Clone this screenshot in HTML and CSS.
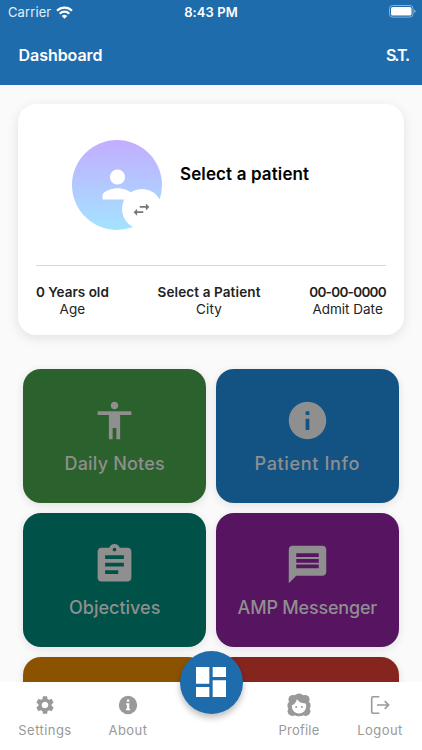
FILE: index.html
```html
<!DOCTYPE html>
<html lang="en">
<head>
<meta charset="utf-8">
<title>Dashboard</title>
<link rel="stylesheet" href="styles.css">
</head>
<body>
<div class="app">
  <header class="header">
    <div class="status">
      <div class="carrier"><span>Carrier</span>
        <svg class="wifi" viewBox="0 0 17 13"><g fill="none" stroke="currentColor" stroke-width="2.2"><path d="M1 4.8a10.6 10.6 0 0 1 15 0"/><path d="M3.7 7.7a6.8 6.8 0 0 1 9.6 0"/></g><path fill="currentColor" d="M5.7 10a4 4 0 0 1 5.6 0L8.5 12.8z"/></svg>
      </div>
      <span class="time">8:43 PM</span>
      <svg class="battery" viewBox="0 0 27 13"><rect x=".5" y=".5" width="23.5" height="11.6" rx="3" fill="none" stroke="#8bb0d1"/><rect x="2" y="2" width="20.5" height="8.6" rx="1.7" fill="#fff"/><path d="M25.2 4.5q1.4.5 1.4 1.8t-1.4 1.8z" fill="#8bb0d1"/></svg>
    </div>
    <div class="titlebar"><h1>Dashboard</h1><span class="initials">S.T.</span></div>
  </header>

  <main class="content">
    <section class="card">
      <div class="patient">
        <div class="avatar">
          <svg class="person" viewBox="0 0 24 24"><path fill="#fff" d="M12 12c2.21 0 4-1.79 4-4s-1.79-4-4-4-4 1.79-4 4 1.79 4 4 4zm0 2c-2.67 0-8 1.34-8 4v2h16v-2c0-2.66-5.33-4-8-4z"/></svg>
          <div class="swap"><svg viewBox="0 0 24 24"><path fill="#777" d="M6.99 11L3 15l3.99 4v-3H14v-2H6.99v-3zM21 9l-3.99-4v3H10v2h7.01v3L21 9z"/></svg></div>
        </div>
        <h2>Select a patient</h2>
      </div>
      <div class="facts">
        <div class="fact age"><strong>0 Years old</strong><span>Age</span></div>
        <div class="fact city"><strong>Select a Patient</strong><span>City</span></div>
        <div class="fact date"><strong>00-00-0000</strong><span>Admit Date</span></div>
      </div>
    </section>

    <section class="tiles">
      <div class="tile green">
        <svg viewBox="0 0 24 24"><path d="M12 2c1.1 0 2 .9 2 2s-.9 2-2 2-2-.9-2-2 .9-2 2-2zm9 7h-6v13h-2v-6h-2v6H9V9H3V7h18v2z"/></svg>
        <span class="daily">Daily Notes</span>
      </div>
      <div class="tile blue">
        <svg viewBox="0 0 24 24"><path d="M12 2C6.48 2 2 6.48 2 12s4.48 10 10 10 10-4.48 10-10S17.52 2 12 2zm1 15h-2v-6h2v6zm0-8h-2V7h2v2z"/></svg>
        <span class="info">Patient Info</span>
      </div>
      <div class="tile teal">
        <svg viewBox="0 0 24 24"><path d="M19 3h-4.18C14.4 1.84 13.3 1 12 1c-1.3 0-2.4.84-2.82 2H5c-1.1 0-2 .9-2 2v14c0 1.1.9 2 2 2h14c1.1 0 2-.9 2-2V5c0-1.1-.9-2-2-2zm-7 0c.55 0 1 .45 1 1s-.45 1-1 1-1-.45-1-1 .45-1 1-1zm2 14H7v-2h7v2zm3-4H7v-2h10v2zm0-4H7V7h10v2z"/></svg>
        <span class="objectives">Objectives</span>
      </div>
      <div class="tile purple">
        <svg viewBox="0 0 24 24"><path d="M20 2H4c-1.1 0-1.99.9-1.99 2L2 22l4-4h14c1.1 0 2-.9 2-2V4c0-1.1-.9-2-2-2zm-2 12H6v-2h12v2zm0-3H6V9h12v2zm0-3H6V6h12v2z"/></svg>
        <span class="messenger">AMP Messenger</span>
      </div>
      <div class="tile orange"></div>
      <div class="tile red"></div>
    </section>
  </main>

  <nav class="nav">
    <div class="item settings">
      <svg viewBox="0 0 24 24"><path fill="currentColor" d="M19.14 12.94c.04-.3.06-.61.06-.94 0-.32-.02-.64-.07-.94l2.03-1.58a.49.49 0 0 0 .12-.61l-1.92-3.32a.488.488 0 0 0-.59-.22l-2.39.96c-.5-.38-1.03-.7-1.62-.94l-.36-2.54a.484.484 0 0 0-.48-.41h-3.84c-.24 0-.43.17-.47.41l-.36 2.54c-.59.24-1.13.57-1.62.94l-2.39-.96c-.22-.08-.47 0-.59.22L2.74 8.87c-.12.21-.08.47.12.61l2.03 1.58c-.05.3-.09.63-.09.94s.02.64.07.94l-2.03 1.58a.49.49 0 0 0-.12.61l1.92 3.32c.12.22.37.29.59.22l2.39-.96c.5.38 1.03.7 1.62.94l.36 2.54c.05.24.24.41.48.41h3.84c.24 0 .44-.17.47-.41l.36-2.54c.59-.24 1.13-.56 1.62-.94l2.39.96c.22.08.47 0 .59-.22l1.92-3.32c.12-.22.07-.47-.12-.61l-2.01-1.58zM12 15.6A3.61 3.61 0 0 1 8.4 12c0-1.98 1.62-3.6 3.6-3.6s3.6 1.62 3.6 3.6-1.62 3.6-3.6 3.6z"/></svg>
      <span>Settings</span>
    </div>
    <div class="item about">
      <svg viewBox="0 0 24 24"><circle cx="12" cy="12" r="10" fill="currentColor"/><path fill="#fff" d="M10.8 6h2.6v2.5h-2.6zM9.8 10h3.6v6h1v1.7H9.8V16h1v-4.3h-1z"/></svg>
      <span>About</span>
    </div>
    <div class="item profile">
      <svg viewBox="0 0 24 24"><g fill="currentColor"><circle cx="12" cy="6" r="5.6"/><circle cx="6" cy="6.5" r="4.6"/><circle cx="18" cy="6.5" r="4.6"/><circle cx="4.4" cy="12.5" r="4"/><circle cx="19.6" cy="12.5" r="4"/><circle cx="5.4" cy="18.2" r="4.8"/><circle cx="18.6" cy="18.2" r="4.8"/><path d="M7 17h10v5q-5 2.5-10 0z"/></g><path fill="#fff" d="M4.7 12.3c2.8-.7 4.6-3.1 5.2-6.3 1.6 2.8 3.9 4.3 8.7 4.5.4.8.6 1.7.6 2.8a7.2 7.2 0 0 1-14.4 0z"/><circle cx="9.2" cy="14" r="1" fill="currentColor"/><circle cx="14.9" cy="14" r="1" fill="currentColor"/></svg>
      <span>Profile</span>
    </div>
    <div class="item logout">
      <svg viewBox="0 0 20 20"><g fill="none" stroke="currentColor" stroke-width="1.6"><path d="M9.3 1.8H3.2q-1.5 0-1.5 1.5v13.4q0 1.5 1.5 1.5h6.1M7 10h11.5M14.7 6.1l3.9 3.9-3.9 3.9"/></g></svg>
      <span>Logout</span>
    </div>
    <div class="fab"><svg viewBox="0 0 24 24"><path fill="#fff" d="M3 13h8V3H3v10zm0 8h8v-6H3v6zm10 0h8V11h-8v10zm0-18v6h8V3h-8z"/></svg></div>
  </nav>
</div>
</body>
</html>
```

FILE: styles.css
```css
* { box-sizing: border-box; }
body { margin: 0; font-family: Inter, "Liberation Sans", sans-serif; }
svg { display: block; flex: none; }
h1, h2 { margin: 0; }
span, strong, h1, h2 { white-space: nowrap; }

.app { width: 422px; height: 750px; display: flex; flex-direction: column; overflow: hidden; background: #fafafa; }

.header { flex: none; height: 85.4px; background: #1f6cac; color: #fff; }
.status { height: 24px; display: grid; grid-template-columns: 1fr auto 1fr; align-items: center; padding: 0 6px 0 8px; font-size: 13px; line-height: 16px; }
.carrier { display: flex; align-items: center; gap: 5px; color: #e5eff7; letter-spacing: .1px; }
.wifi { width: 17px; height: 13px; color: #fff; }
.time { font-weight: 600; letter-spacing: .1px; margin-left: -2px; }
.battery { width: 27px; height: 13px; justify-self: end; margin-top: -2px; }
.titlebar { height: 61px; display: flex; justify-content: space-between; align-items: center; padding: 0 14px 0 18.5px; }
h1, .initials { font-size: 16px; line-height: 20px; font-weight: 600; }
h1 { letter-spacing: -.05px; }
.initials { letter-spacing: -2px; }

.content { flex: 1; min-height: 0; overflow: hidden; padding: 18.6px 18px 0; }
.card { height: 231px; padding: 35.6px 18px 0; border-radius: 18px; background: #fff; box-shadow: 0 3px 12px rgba(0, 0, 0, .1); }
.patient { height: 126px; padding-left: 36px; display: flex; gap: 18px; border-bottom: 1.5px solid #d8d8d8; }
.avatar { position: relative; flex: none; width: 90px; height: 90px; border-radius: 50%; display: flex; justify-content: center; align-items: center; background: linear-gradient(#c3adff, #a3e3ff); }
.person { width: 45px; height: 45px; }
.swap { position: absolute; left: 49.5px; top: 49.5px; width: 40px; height: 40px; border-radius: 50%; background: #fff; display: flex; align-items: center; justify-content: center; }
.swap svg { width: 21px; height: 21px; }
h2 { margin-top: 24px; font-size: 17px; line-height: 21px; font-weight: 600; letter-spacing: .12px; color: #000; }
.facts { display: flex; justify-content: space-between; padding-top: 18px; }
.fact { display: flex; flex-direction: column; align-items: center; font-size: 13.5px; line-height: 17px; color: #222; }
.fact strong { font-weight: 600; }
.fact span { letter-spacing: .2px; }
.city strong { letter-spacing: .12px; }
.date strong { letter-spacing: -.7px; }
.date span { letter-spacing: 0; }

.tiles { margin-top: 34px; padding: 0 5px; display: grid; grid-template-columns: 1fr 1fr; grid-auto-rows: 134.5px; gap: 9.3px; }
.tile { border-radius: 18px; display: flex; flex-direction: column; align-items: center; padding-top: 29px; color: #8f8f8f; font-size: 18px; line-height: 22px; font-weight: 500; box-shadow: 0 2px 9px rgba(0, 0, 0, .11); }
.tile svg { width: 45px; height: 45px; fill: currentColor; margin-bottom: 10px; }
.daily { letter-spacing: .2px; }
.info { letter-spacing: .65px; }
.messenger { letter-spacing: -.2px; }
.green { background: #2b612d; }
.blue { background: #135384; }
.teal { background: #005248; }
.purple { background: #561461; }
.orange { background: #8b5200; }
.red { background: #86251e; }

.nav { position: relative; flex: none; height: 68px; background: #fff; color: #999; display: grid; grid-template-columns: 90px 76px 90px 86px 80px; }
.item { display: flex; flex-direction: column; align-items: center; justify-content: flex-start; padding-top: 12px; font-size: 13px; line-height: 17px; letter-spacing: .45px; }
.item svg { width: 22px; height: 22px; margin-bottom: 6px; }
.profile { grid-column: 4; }
.profile svg { width: 24px; height: 24px; margin: -1px 0 5px; }
.profile span { letter-spacing: .2px; }
.logout { padding-right: 4px; }
.logout svg { width: 20px; height: 20px; margin: 1px 0 7px; }
.fab { position: absolute; left: 179.5px; top: -31.5px; width: 63px; height: 63px; border-radius: 50%; background: #1f6cac; display: flex; align-items: center; justify-content: center; box-shadow: 0 4px 6px rgba(0, 0, 0, .25); }
.fab svg { width: 40px; height: 40px; }
```
